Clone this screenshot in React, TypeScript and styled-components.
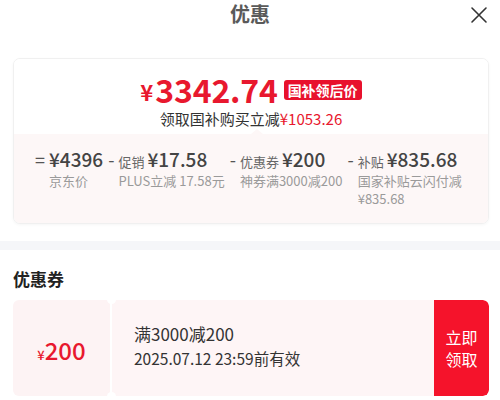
import React from "react";
import styled, { createGlobalStyle } from "styled-components";

const Global = createGlobalStyle`
  html, body { margin: 0; padding: 0; background: #fff; }
  body { font-family: "Noto Sans CJK SC", "Noto Sans", sans-serif; }
  * { box-sizing: border-box; }
`;

const Page = styled.div`
  width: 500px;
  height: 400px;
  overflow: hidden;
  background: #fff;
  display: flex;
  flex-direction: column;
`;

const Header = styled.div`
  position: relative;
  height: 28px;
  display: flex;
  align-items: center;
  justify-content: center;
`;

const Title = styled.div`
  font-size: 20px;
  line-height: 28px;
  font-weight: 700;
  color: #5a5a5a;
`;

const Close = styled.button`
  position: absolute;
  right: 12px;
  top: 6px;
  width: 18px;
  height: 18px;
  padding: 0;
  border: 0;
  background: none;
  display: flex;
`;

const Card = styled.div`
  margin: 30px 11px 0 13px;
  border: 1px solid #f0f0f0;
  border-radius: 7px;
  overflow: hidden;
  box-shadow: 0 1px 3px rgba(0, 0, 0, 0.04);
`;

const CardTop = styled.div`
  height: 75px;
  display: flex;
  flex-direction: column;
  align-items: center;
  padding-top: 12px;
  background: #fff;
`;

const PriceRow = styled.div`
  display: flex;
  align-items: center;
  height: 36px;
`;

const Yen = styled.span`
  font-size: 22px;
  font-weight: 700;
  color: #e8182e;
  margin-right: 2px;
  margin-top: 4px;
`;

const BigPrice = styled.span`
  font-size: 32px;
  line-height: 36px;
  font-weight: 700;
  color: #e8182e;
  letter-spacing: -0.2px;
`;

const Tag = styled.span`
  margin-left: 6px;
  margin-top: 2px;
  background: #e8112d;
  color: #fff;
  font-size: 14px;
  font-weight: 700;
  line-height: 20px;
  padding: 0 4px;
  border-radius: 3px;
`;

const SubLine = styled.div`
  margin-top: 2px;
  font-size: 15px;
  line-height: 20px;
  color: #333;
`;

const Red = styled.span`
  color: #e8182e;
`;

const CardBottom = styled.div`
  position: relative;
  height: 89px;
  background: #fdf7f7;
  display: flex;
  padding: 12px 0 0 21px;
  gap: 5px;
`;

const Caret = styled.div`
  position: absolute;
  top: -5px;
  left: 237px;
  width: 0;
  height: 0;
  border-left: 6px solid transparent;
  border-right: 6px solid transparent;
  border-bottom: 5px solid #fdf7f7;
`;

const Item = styled.div`
  display: flex;
  gap: 4px;
`;

const Sign = styled.span`
  font-size: 18px;
  line-height: 26px;
  color: #555;
`;

const ItemBody = styled.div`
  display: flex;
  flex-direction: column;
`;

const ItemTop = styled.div`
  display: flex;
  align-items: baseline;
  gap: 3px;
  height: 26px;
  line-height: 26px;
`;

const Label = styled.span`
  font-size: 13px;
  color: #666;
`;

const Value = styled.span`
  font-size: 19px;
  color: #444;
  font-weight: 500;
`;

const Desc = styled.div`
  font-size: 13px;
  line-height: 18px;
  color: #9a9a9a;
  white-space: nowrap;
`;

const Band = styled.div`
  margin-top: 17px;
  height: 9px;
  background: #f5f6f9;
`;

const SectionTitle = styled.div`
  margin: 17px 0 0 13px;
  font-size: 17px;
  line-height: 24px;
  font-weight: 700;
  color: #222;
`;

const Coupon = styled.div`
  position: relative;
  margin: 9px 11px 0 13px;
  height: 96px;
  display: flex;
  border-radius: 6px;
  overflow: hidden;
`;

const Notch = styled.div<{ $pos: "top" | "bottom" }>`
  position: absolute;
  left: 94px;
  ${(p) => (p.$pos === "top" ? "top: -5px;" : "bottom: -5px;")}
  width: 9px;
  height: 9px;
  border-radius: 50%;
  background: #fff;
`;

const CouponLeft = styled.div`
  width: 97px;
  background: #fdf3f4;
  display: flex;
  align-items: baseline;
  justify-content: center;
  padding-top: 32px;
  color: #e8182e;
`;

const SmallYen = styled.span`
  font-size: 13px;
  font-weight: 500;
`;

const CouponAmount = styled.span`
  font-size: 24px;
  font-weight: 500;
`;

const CouponMid = styled.div`
  flex: 1;
  margin-left: 2px;
  background: #fef5f6;
  display: flex;
  flex-direction: column;
  justify-content: center;
  padding: 0 0 4px 22px;
  color: #333;
`;

const CouponLine = styled.div<{ $size: number }>`
  font-size: ${(p) => p.$size}px;
  line-height: 25px;
`;

const ClaimButton = styled.button`
  width: 55px;
  border: 0;
  background: #f5132b;
  color: #fff;
  font-family: inherit;
  font-size: 16px;
  line-height: 22px;
  padding: 0;
  border-radius: 0 6px 6px 0;
`;

type Part = { sign: string; label?: string; value: string; desc: string[] };

const parts: Part[] = [
  { sign: "=", value: "¥4396", desc: ["京东价"] },
  { sign: "-", label: "促销", value: "¥17.58", desc: ["PLUS立减 17.58元"] },
  { sign: "-", label: "优惠券", value: "¥200", desc: ["神券满3000减200"] },
  { sign: "-", label: "补贴", value: "¥835.68", desc: ["国家补贴云闪付减", "¥835.68"] },
];

export default function App() {
  return (
    <Page>
      <Global />
      <Header>
        <Title>优惠</Title>
        <Close aria-label="close">
          <svg width="18" height="18" viewBox="0 0 18 18">
            <path d="M2 2 L16 16 M16 2 L2 16" stroke="#333" strokeWidth="1.6" strokeLinecap="round" />
          </svg>
        </Close>
      </Header>
      <Card>
        <CardTop>
          <PriceRow>
            <Yen>¥</Yen>
            <BigPrice>3342.74</BigPrice>
            <Tag>国补领后价</Tag>
          </PriceRow>
          <SubLine>
            领取国补购买立减<Red>¥1053.26</Red>
          </SubLine>
        </CardTop>
        <CardBottom>
          <Caret />
          {parts.map((p, i) => (
            <Item key={i}>
              <Sign>{p.sign}</Sign>
              <ItemBody>
                <ItemTop>
                  {p.label && <Label>{p.label}</Label>}
                  <Value>{p.value}</Value>
                </ItemTop>
                {p.desc.map((d, j) => (
                  <Desc key={j}>{d}</Desc>
                ))}
              </ItemBody>
            </Item>
          ))}
        </CardBottom>
      </Card>
      <Band />
      <SectionTitle>优惠券</SectionTitle>
      <Coupon>
        <CouponLeft>
          <SmallYen>¥</SmallYen>
          <CouponAmount>200</CouponAmount>
        </CouponLeft>
        <CouponMid>
          <CouponLine $size={17}>满3000减200</CouponLine>
          <CouponLine $size={15.5}>2025.07.12 23:59前有效</CouponLine>
        </CouponMid>
        <ClaimButton>
          立即
          <br />
          领取
        </ClaimButton>
        <Notch $pos="top" />
        <Notch $pos="bottom" />
      </Coupon>
    </Page>
  );
}
